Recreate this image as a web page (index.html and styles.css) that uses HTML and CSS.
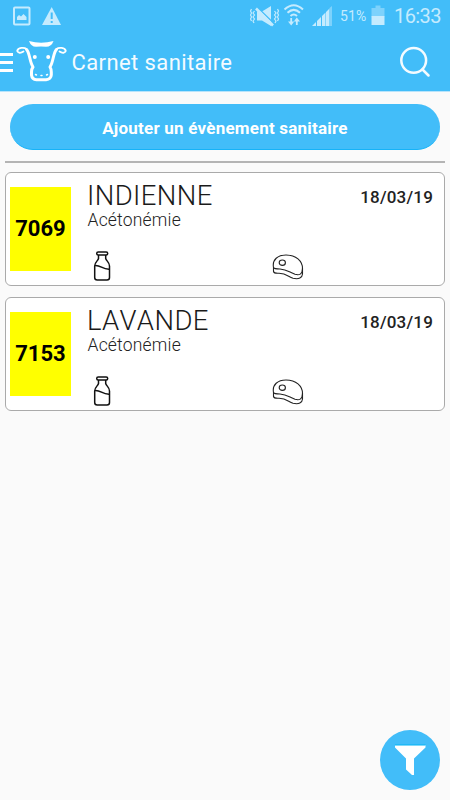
FILE: index.html
```
<!DOCTYPE html>
<html lang="fr">
<head>
    <meta charset="UTF-8">
    <meta name="viewport" content="width=device-width, initial-scale=1.0">
    <title>Carnet sanitaire</title>
    <link rel="stylesheet" href="styles.css">
</head>
<body>

    <header class="header">
        <div class="status-bar">
            <svg width="64" height="33" viewBox="0 0 64 33">
                <rect x="14" y="7.5" width="15.500" height="17" rx="1" fill="none" stroke="#c5ebfe" stroke-width="2"/>
                <path d="M17 20v-3l2-2 2 1.500 2.500-2.500 3 3v3z" fill="#c5ebfe"/>
                <path d="M51.700 7L61 25H42z" fill="#c5ebfe"/>
                <path d="M51.700 12.500v6.500M51.700 21v2" stroke="#42bdf9" stroke-width="2"/>
            </svg>
            <div class="status-right">
                <svg width="84" height="33" viewBox="250 0 84 33">
                    <!-- muted speaker -->
                    <path d="M257 11.500h5L271 6v20l-9-5.500h-5z" fill="#c5ebfe"/>
                    <path d="M257.500 7.500L274.500 24" stroke="#42bdf9" stroke-width="1.500"/>
                    <path d="M256 8.500L273 25.500" stroke="#c5ebfe" stroke-width="2.600"/>
                    <path d="M254.500 11l-1.500 2 1.500 2-1.500 2 1.500 2-1.500 2 1 2M251.500 9l-1 2 1 2-1 2 1 2-1 2 1 2M274.500 11l1.500 2-1.500 2 1.500 2-1.500 2 1.500 2-1 2M277.500 9l1 2-1 2 1 2-1 2 1 2-1 2" fill="none" stroke="#c5ebfe" stroke-width="1.200"/>
                    <!-- wifi -->
                    <g fill="none" stroke="#c5ebfe" stroke-width="2">
                        <path d="M284.500 9.500Q293.800 1 303 9.500M287.500 12.800Q293.800 7 300 12.800M290.500 16Q293.800 13 297 16"/>
                        <path d="M291.200 18v6M296.800 25v-6" stroke-width="1.800"/>
                    </g>
                    <path d="M288 21.500h6.200L291.200 25.500zM293.800 21.500h6.200L296.800 17.500z" fill="#c5ebfe"/>
                    <!-- signal -->
                    <path d="M312 26l4-4V26zM317 21l4-4v9h-4zM322 16l3.500-3.500V26H322zM326 12L329.500 8.500v17.500H326z" fill="#c5ebfe"/>
                    <path d="M329.500 8L332 6v20h-2.500z" fill="#7dd2fc"/>
                </svg>
                <span class="battery-level">51%</span>
                <svg width="14" height="33" viewBox="371 0 14 33">
                    <path d="M375.500 5.500h5V8h4v8.500h-13V8h4z" fill="#7dd2fc"/>
                    <path d="M371.500 16h13v9h-13z" fill="#c5ebfe"/>
                </svg>
                <span class="clock">16:33</span>
            </div>
        </div>
        <div class="app-bar">
            <svg width="68" height="58" viewBox="0 33 68 58">
                <path d="M0 54.500h13M0 62.500h13M0 70.500h13" stroke="#fff" stroke-width="3.200"/>
                <!-- cow head -->
                <path d="M29 41Q41 44.500 53.500 41Q51.500 46.800 46 46.800Q41 46 36 46.800Q31 46.800 29 41z" fill="#fff"/>
                <g fill="none" stroke="#fff" stroke-linecap="round" stroke-linejoin="round">
                    <path d="M23.500 51.500C20.500 53.500 18 53 17.200 51C18 47.500 24 47 26.500 49M59.500 51.500C62.500 53.500 65 53 65.800 51C65 47.500 59 47 56.500 49" stroke-width="1.800"/>
                    <path d="M26.500 49.500C30 53 29.500 62 33 67Q31.500 69 31.500 72V75Q32 79.300 36.500 79.800H46Q51 79.300 51.300 75V72Q51.300 69 50 67C53.500 62 53 53 56.500 49.500" stroke-width="3"/>
                    <path d="M35.500 74.500l1 .5M47.500 74.500l-1 .5M41 75.500h1" stroke-width="1.500"/>
                </g>
                <circle cx="34.800" cy="57" r="2" fill="#fff"/>
                <circle cx="48.200" cy="57" r="2" fill="#fff"/>
            </svg>
            <h1 class="title">Carnet sanitaire</h1>
            <svg class="search" width="34" height="34" viewBox="398 45 34 34">
                <g fill="none" stroke="#f4fbff" stroke-width="2.500" stroke-linecap="round">
                    <circle cx="413.700" cy="60.300" r="12.400"/>
                    <path d="M422.500 69.500l6 6"/>
                </g>
            </svg>
        </div>
    </header>

    <main class="content">
        <button class="add-btn">Ajouter un évènement sanitaire</button>
        <hr class="separator">

        <article class="card">
            <div class="tag">7069</div>
            <div class="details">
                <div class="card-head">
                    <h2 class="name">INDIENNE</h2>
                    <span class="date">18/03/19</span>
                </div>
                <p class="disease">Acétonémie</p>
                <div class="icons">
                    <svg class="milk" width="20" height="32" viewBox="0 0 20 32"><use href="#milk"/></svg>
                    <svg class="meat" width="32" height="26" viewBox="0 0 32 26"><use href="#meat"/></svg>
                </div>
            </div>
        </article>

        <article class="card">
            <div class="tag">7153</div>
            <div class="details">
                <div class="card-head">
                    <h2 class="name">LAVANDE</h2>
                    <span class="date">18/03/19</span>
                </div>
                <p class="disease">Acétonémie</p>
                <div class="icons">
                    <svg class="milk" width="20" height="32" viewBox="0 0 20 32"><use href="#milk"/></svg>
                    <svg class="meat" width="32" height="26" viewBox="0 0 32 26"><use href="#meat"/></svg>
                </div>
            </div>
        </article>
    </main>

    <button class="filter-btn" aria-label="Filtrer">
        <svg width="60" height="60" viewBox="0 0 60 60">
            <path d="M15 15h30.500v2.500L34 28.500V45h-2L26 39.500v-11L15 17.500z" fill="#fff"/>
            <path d="M15 15h30.500" stroke="#00b4f5" stroke-width="1"/>
        </svg>
    </button>

    <!-- shared card icons -->
    <svg class="symbols" width="0" height="0">
        <symbol id="milk" viewBox="0 0 20 32">
            <g fill="none" stroke="#111" stroke-width="1.500" stroke-linejoin="round">
                <rect x="4.700" y="2" width="11" height="3" rx="1.500"/>
                <path d="M6.500 5v3.500C6 11 2.700 12 2.700 16v11.500q0 2.500 2.500 2.500h9.800Q17.500 30 17.500 27.500V16c0-4-3.300-5-3.800-7.500V5"/>
                <path d="M3 15.500c6-.5 7 4 14.500 3.700"/>
            </g>
        </symbol>
        <symbol id="meat" viewBox="0 0 32 26">
            <g fill="none" stroke="#222" stroke-width="1.100">
                <path d="M1.500 13.500C0 5.500 6 1 14 1C24 1 30.500 7 30.500 14.500C30.500 20.500 27 21.500 23 20.300C17 18 15 15.500 8 15Q2 15 1.500 13.500z"/>
                <path d="M1.500 13.500v4q.5 2 5 1.800C14 19 16 22.500 21 24.300Q30 26 30.500 20v-6"/>
                <ellipse cx="10.300" cy="8.700" rx="3.100" ry="2.700"/>
            </g>
        </symbol>
    </svg>

</body>
</html>
```
FILE: styles.css
```
body {
    font-family: Roboto, "Liberation Sans", sans-serif;
    margin: 0;
    padding: 0;
    min-height: 100vh;
    background: #fafafa;
    color: #222;
}

svg {
    display: block;
    flex-shrink: 0;
}

button {
    border: none;
    padding: 0;
    font-family: inherit;
    cursor: pointer;
}

.header {
    height: 91px;
    background: #42bdf9;
    border-bottom: 1px solid #b8e4fb;
}

.status-bar {
    height: 33px;
    display: flex;
    justify-content: space-between;
    color: #c5ebfe;
    line-height: 33px;
}

.status-right {
    display: flex;
    width: 200px;
}

.battery-level {
    width: 31px;
    margin-left: 6px;
    font-size: 14px;
    letter-spacing: 0.1px;
}

.clock {
    margin-left: 9px;
    font-size: 20px;
    letter-spacing: -0.6px;
}

.app-bar {
    height: 58px;
    display: flex;
    align-items: center;
}

.title {
    flex: 1;
    margin: 0 0 0 3.5px;
    color: #f4fbff;
    font-size: 22px;
    font-weight: 400;
    letter-spacing: 0.4px;
    white-space: nowrap;
}

.search {
    margin-right: 18px;
}

.content {
    padding: 12px 5px;
}

.add-btn {
    display: block;
    width: 430px;
    height: 46px;
    margin: 0 auto;
    padding-top: 2px;
    border-radius: 23px;
    background: #42bdf9;
    color: #fff;
    font-size: 17px;
    font-weight: 700;
    letter-spacing: 0.22px;
    border-bottom: 1px solid #16b3f8;
}

.separator {
    height: 2px;
    margin: 11px 0 9px;
    border: none;
    background: #b4b4b4;
}

.card {
    display: flex;
    align-items: center;
    box-sizing: border-box;
    height: 114px;
    margin-bottom: 11px;
    padding: 0 11px 0 4px;
    background: #fff;
    border: 1px solid #aaa;
    border-radius: 6px;
}

.tag {
    width: 61px;
    height: 84px;
    background: #ff0;
    color: #000;
    font-size: 22px;
    font-weight: 700;
    line-height: 84px;
    text-align: center;
}

.details {
    flex: 1;
    height: 112px;
    margin-left: 17px;
}

.card-head {
    display: flex;
    justify-content: space-between;
    height: 36px;
}

.name {
    margin: 7px 0 0 -1px;
    color: #1a1a1a;
    font-size: 27.5px;
    font-weight: 300;
    letter-spacing: 0.4px;
    line-height: 32px;
    font-kerning: none;
}

.date {
    padding-top: 14px;
    font-size: 17px;
    font-weight: 500;
    letter-spacing: 0.2px;
    line-height: 20px;
}

.disease {
    margin: 1px 0 0 -0.5px;
    font-size: 17.5px;
    font-weight: 300;
    letter-spacing: 0.2px;
    line-height: 20px;
}

.icons {
    display: flex;
    padding-top: 20px;
}

.milk {
    margin-left: 4px;
}

.meat {
    margin: 4px 0 0 160px;
}

.filter-btn {
    position: fixed;
    right: 10px;
    bottom: 10px;
    width: 60px;
    height: 60px;
    border-radius: 50%;
    background: #42bdf9;
}

.symbols {
    position: absolute;
}
```
